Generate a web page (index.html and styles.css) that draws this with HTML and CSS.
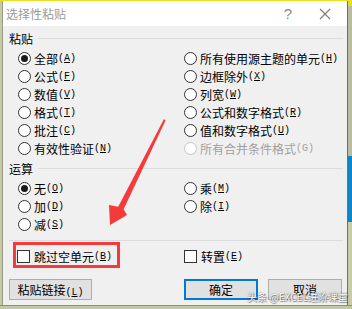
FILE: index.html
```html
<!DOCTYPE html>
<html lang="zh-CN">
<head>
  <meta charset="UTF-8" />
  <title>选择性粘贴</title>
  <link rel="stylesheet" href="styles.css">
</head>
<body>
  <div class="screen">
    <div class="top-strip"></div>
    <div class="middle">
      <div class="side-left"></div>
      <div class="dialog">
        <div class="titlebar">
          <span class="title">选择性粘贴</span>
          <span class="help">?</span>
          <span class="close">
            <svg width="12" height="12" viewBox="0 0 12 12"><path d="M1 1 L11 11 M11 1 L1 11" stroke="#7a7a7a" stroke-width="1.1" fill="none"/></svg>
          </span>
        </div>
        <div class="content">
          <div class="group-head"><span>粘贴</span><i class="rule"></i></div>
          <div class="options">
            <label class="opt"><span class="radio on"></span>全部<span class="key">(<u>A</u>)</span></label>
            <label class="opt"><span class="radio"></span>所有使用源主题的单元<span class="key">(<u>H</u>)</span></label>
            <label class="opt"><span class="radio"></span>公式<span class="key">(<u>F</u>)</span></label>
            <label class="opt"><span class="radio"></span>边框除外<span class="key">(<u>X</u>)</span></label>
            <label class="opt"><span class="radio"></span>数值<span class="key">(<u>V</u>)</span></label>
            <label class="opt"><span class="radio"></span>列宽<span class="key">(<u>W</u>)</span></label>
            <label class="opt"><span class="radio"></span>格式<span class="key">(<u>T</u>)</span></label>
            <label class="opt"><span class="radio"></span>公式和数字格式<span class="key">(<u>R</u>)</span></label>
            <label class="opt"><span class="radio"></span>批注<span class="key">(<u>C</u>)</span></label>
            <label class="opt"><span class="radio"></span>值和数字格式<span class="key">(<u>U</u>)</span></label>
            <label class="opt"><span class="radio"></span>有效性验证<span class="key">(<u>N</u>)</span></label>
            <label class="opt disabled"><span class="radio"></span>所有合并条件格式<span class="key">(G)</span></label>
          </div>

          <div class="group-head second"><span>运算</span><i class="rule"></i></div>
          <div class="options">
            <label class="opt"><span class="radio on"></span>无<span class="key">(<u>O</u>)</span></label>
            <label class="opt"><span class="radio"></span>乘<span class="key">(<u>M</u>)</span></label>
            <label class="opt"><span class="radio"></span>加<span class="key">(<u>D</u>)</span></label>
            <label class="opt"><span class="radio"></span>除<span class="key">(<u>I</u>)</span></label>
            <label class="opt"><span class="radio"></span>减<span class="key">(<u>S</u>)</span></label>
          </div>

          <div class="separator"></div>

          <div class="options checks">
            <label class="opt"><span class="check"></span>跳过空单元<span class="key">(<u>B</u>)</span></label>
            <label class="opt"><span class="check"></span>转置<span class="key">(<u>E</u>)</span></label>
          </div>

          <div class="buttons">
            <button class="btn wide">粘贴链接<span class="key">(<u>L</u>)</span></button>
            <span class="spacer"></span>
            <button class="btn default">确定</button>
            <button class="btn">取消</button>
          </div>
        </div>
      </div>
      <div class="side-right">
        <div class="sr-yellow"></div>
        <div class="sr-grey"></div>
        <div class="sr-blue"></div>
        <div class="sr-green"></div>
      </div>
    </div>
    <div class="bottom-strip"></div>
  </div>

  <div class="mark-box"></div>
  <svg class="arrow" width="352" height="309" viewBox="0 0 352 309">
    <polygon points="164,119 165.5,120.5 123.6,209.3 127,215 110,225 109,205 118.2,206.7" fill="#f43a3a"/>
  </svg>
  <div class="watermark">头条 @EXCEL进阶课堂</div>
</body>
</html>
```

FILE: styles.css
```css
body {
  margin: 0;
  font-family: "Noto Sans CJK SC", sans-serif;
  font-size: 12px;
  color: #000;
  position: relative;
  width: 352px;
  height: 309px;
  overflow: hidden;
}

.screen {
  display: flex;
  flex-direction: column;
  height: 309px;
  background: #c9cfae;
}

.top-strip {
  height: 1px;
  background: #e8e020;
}

.middle {
  display: flex;
  height: 304px;
}

.side-left {
  width: 2px;
  background: #c5cca4;
  border-right: 1px solid #9a9a8a;
}

.dialog {
  width: 344px;
  display: flex;
  flex-direction: column;
}

.side-right {
  width: 4px;
  border-left: 1px solid #6e6e6e;
  display: flex;
  flex-direction: column;
}

.sr-yellow { height: 5px; background: #e6dc28; }
.sr-grey { height: 150px; background: #b8bda2; }
.sr-blue { height: 66px; background: #0b87c9; }
.sr-green { flex: 1; background: #c6cca8; }

.bottom-strip {
  height: 4px;
  background: #c2c8a2;
  border-top: 1px solid #8c8c80;
  box-sizing: border-box;
}

/* title bar */
.titlebar {
  height: 25px;
  background: #fff;
  display: flex;
  align-items: center;
}

.title {
  padding-left: 3px;
  color: #9a9a9a;
  font-size: 12px;
  flex: 1;
}

.help {
  width: 30px;
  text-align: center;
  color: #8a8a8a;
  font-family: "Liberation Sans", sans-serif;
  font-size: 15px;
}

.close {
  width: 44px;
  display: flex;
  justify-content: center;
  align-items: center;
}

/* body */
.content {
  flex: 1;
  background: #f0f0f0;
  padding: 6px 4px 5px 6px;
  display: flex;
  flex-direction: column;
}

.group-head {
  height: 14px;
  display: flex;
  align-items: center;
  line-height: 14px;
}

.group-head.second {
  margin-top: 5px;
}

.rule {
  flex: 1;
  height: 1px;
  background: #dcdcdc;
  margin-left: 5px;
  margin-top: -1px;
}

.options {
  margin-top: 3px;
  padding-left: 9px;
  display: grid;
  grid-template-columns: 166px 1fr;
  grid-auto-rows: 18px;
}

.opt {
  display: flex;
  align-items: center;
  white-space: nowrap;
}

.opt.disabled {
  color: #a0a0a0;
}

.key {
  font-family: "Liberation Mono", monospace;
  font-size: 10px;
}

.radio {
  width: 11px;
  height: 11px;
  border: 1px solid #333;
  border-radius: 50%;
  background: #fff;
  margin-right: 3px;
  display: flex;
  align-items: center;
  justify-content: center;
  flex: none;
}

.radio.on::after {
  content: "";
  width: 7px;
  height: 7px;
  border-radius: 50%;
  background: #1a1a1a;
}

.disabled .radio {
  border-color: #c4c4c4;
}

.separator {
  height: 1px;
  background: #dcdcdc;
  margin-top: 7px;
}

.checks {
  margin-top: 6px;
  padding-left: 8px;
  grid-template-columns: 167px 1fr;
}

.check {
  width: 11px;
  height: 11px;
  border: 1px solid #333;
  background: #fff;
  margin-right: 4px;
  flex: none;
}

.buttons {
  margin-top: 14px;
  display: flex;
  gap: 10px;
  padding-right: 1px;
}

.spacer {
  flex: 1;
}

.btn {
  height: 21px;
  width: 74px;
  padding: 0;
  font-family: "Noto Sans CJK SC", sans-serif;
  font-size: 12px;
  background: #e1e1e1;
  border: 1px solid #adadad;
  color: #000;
}

.btn.wide {
  width: 83px;
}

.btn.default {
  border: 2px solid #0078d7;
}

/* annotations */
.mark-box {
  position: absolute;
  left: 13px;
  top: 242px;
  width: 101px;
  height: 20px;
  border: 3px solid #f43a3a;
}

.arrow {
  position: absolute;
  left: 0;
  top: 0;
  pointer-events: none;
}

.watermark {
  position: absolute;
  left: 247px;
  top: 289px;
  font-size: 10px;
  color: #fff;
  white-space: nowrap;
  text-shadow: 0 0 1px #555, 1px 1px 1px rgba(0, 0, 0, 0.45);
}
```
